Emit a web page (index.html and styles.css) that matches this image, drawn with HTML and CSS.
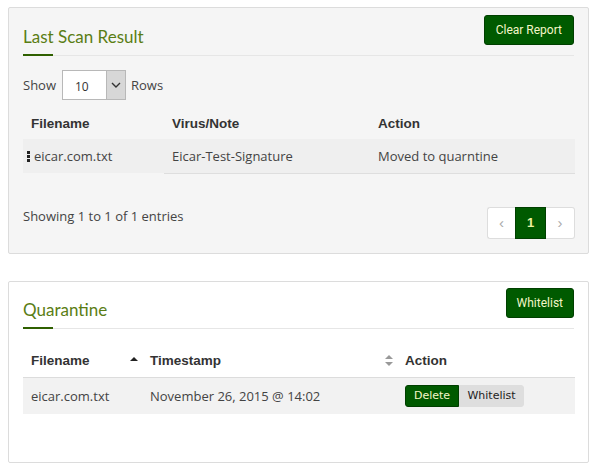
FILE: index.html
```html
<!DOCTYPE html>
<html>
<head>
<meta charset="utf-8">
<link rel="stylesheet" href="styles.css">
</head>
<body>
<section class="panel panel-grey">
  <div class="panel-head">
    <div class="title-wrap">
      <h2 class="title">Last Scan Result</h2>
      <div class="title-bar"></div>
    </div>
    <button class="btn-green btn-lg">Clear Report</button>
  </div>
  <div class="show-row">
    <span>Show</span>
    <div class="select">
      <span class="select-val">10</span>
      <span class="select-arrow">
        <svg width="10" height="6" viewBox="0 0 10 6"><path d="M1 1 L5 5 L9 1" fill="none" stroke="#333" stroke-width="1.4"/></svg>
      </span>
    </div>
    <span>Rows</span>
  </div>
  <table class="tbl tbl-scan">
    <thead>
      <tr><th class="c1">Filename</th><th class="c2">Virus/Note</th><th class="c3">Action</th></tr>
    </thead>
    <tbody>
      <tr>
        <td class="c1 first"><span class="dots"><i></i><i></i><i></i></span><span>eicar.com.txt</span></td>
        <td class="c2 bordered">Eicar-Test-Signature</td>
        <td class="c3 bordered">Moved to quarntine</td>
      </tr>
    </tbody>
  </table>
  <div class="foot-row">
    <span class="info">Showing 1 to 1 of 1 entries</span>
    <div class="pager">
      <span class="pg pg-prev">&lsaquo;</span>
      <span class="pg pg-active">1</span>
      <span class="pg pg-next">&rsaquo;</span>
    </div>
  </div>
</section>

<section class="panel panel-white">
  <div class="panel-head">
    <div class="title-wrap">
      <h2 class="title">Quarantine</h2>
      <div class="title-bar"></div>
    </div>
    <button class="btn-green btn-lg btn-wl">Whitelist</button>
  </div>
  <table class="tbl tbl-q">
    <thead>
      <tr>
        <th class="q1"><span>Filename</span><svg class="sort" width="8" height="6" viewBox="0 0 8 6"><path d="M0 5 L4 1 L8 5 Z" fill="#222"/></svg></th>
        <th class="q2"><span>Timestamp</span><svg class="sort" width="8" height="11" viewBox="0 0 8 11"><path d="M0 4 L4 0 L8 4 Z M0 7 L4 11 L8 7 Z" fill="#999"/></svg></th>
        <th class="q3">Action</th>
      </tr>
    </thead>
    <tbody>
      <tr>
        <td>eicar.com.txt</td>
        <td>November 26, 2015 @ 14:02</td>
        <td><span class="grp"><button class="btn-green btn-sm">Delete</button><button class="btn-grey btn-sm">Whitelist</button></span></td>
      </tr>
    </tbody>
  </table>
</section>
</body>
</html>
```

FILE: styles.css
```css
* { box-sizing: border-box; }
body {
  margin: 0;
  padding: 7px 11px 0 8px;
  font-family: "Open Sans", Lato, sans-serif;
  font-size: 13px;
  color: #444;
  background: #fff;
}
.panel {
  width: 581px;
  border: 1px solid #dcdcdc;
  border-radius: 2px;
  padding: 0 14px;
}
.panel-grey { background: #f5f5f5; padding-bottom: 14px; }
.panel-white { background: #fff; margin-top: 27px; padding-bottom: 48px; }

.panel-head {
  display: flex;
  justify-content: space-between;
  align-items: flex-start;
  border-bottom: 1px solid #e6e6e6;
  padding-top: 7px;
}
.panel-white .panel-head { padding-top: 6px; }
.title-wrap { padding-top: 11px; }
.title {
  margin: 0;
  font-family: Lato, sans-serif;
  font-weight: 400;
  font-size: 17px;
  line-height: 22px;
  color: #5a7d14;
}
.title-bar {
  width: 30px;
  height: 2px;
  background: #2f6000;
  margin-top: 6px;
  margin-bottom: -1px;
}
.btn-green, .btn-grey {
  font-family: Roboto, "Liberation Sans", sans-serif;
  cursor: pointer;
}
.btn-green {
  background: #005a00;
  border: 1px solid #003f00;
  color: #f4f6c8;
}
.btn-lg {
  height: 30px;
  padding: 0 11px;
  font-size: 12px;
  border-radius: 3px;
}
.btn-wl { padding: 0 10px; }

.show-row {
  display: flex;
  align-items: center;
  gap: 5px;
  margin-top: 14px;
  color: #444;
}
.select {
  display: flex;
  width: 64px;
  height: 30px;
  border: 1px solid #b8b8b8;
  background: #fff;
  margin-left: 1px;
}
.select-val {
  flex: 1;
  font-size: 12px;
  padding-left: 12px;
  padding-top: 7px;
  color: #333;
}
.select-arrow {
  width: 19px;
  background: #d7d7d7;
  border-left: 1px solid #b8b8b8;
  display: flex;
  align-items: center;
  justify-content: center;
}

.tbl {
  width: 552px;
  border-collapse: collapse;
  table-layout: fixed;
}
.tbl th {
  font-family: "Liberation Sans", Arial, sans-serif;
  font-weight: 700;
  font-size: 13.5px;
  color: #333;
  text-align: left;
  padding: 0 8px;
}
.tbl td { padding: 0 8px; color: #444; }

.tbl-scan { margin-top: 7px; }
.tbl-scan th { height: 32px; }
.tbl-scan td { height: 34px; background: #efefef; }
.tbl-scan .c1 { width: 141px; }
.tbl-scan .c2 { width: 206px; }
.tbl-scan td.first { padding-left: 4px; }
.tbl-scan td.bordered { border-bottom: 1px solid #dedede; }
.dots {
  display: inline-flex;
  flex-direction: column;
  gap: 1px;
  margin-right: 4px;
  vertical-align: middle;
  position: relative;
  top: -1px;
}
.dots i {
  display: block;
  width: 3px;
  height: 3px;
  background: #222;
}

.foot-row {
  display: flex;
  justify-content: space-between;
  align-items: flex-start;
  margin-top: 33px;
}
.info { color: #444; }
.pager {
  display: flex;
  height: 32px;
  margin-right: -1px;
}
.pg {
  display: flex;
  align-items: center;
  justify-content: center;
  background: #fff;
  border: 1px solid #ddd;
  color: #aaa;
  font-size: 15px;
  font-family: "Liberation Sans", sans-serif;
}
.pg-prev { width: 28px; border-radius: 3px 0 0 3px; border-right: 0; }
.pg-next { width: 29px; border-radius: 0 3px 3px 0; border-left: 0; }
.pg-active {
  width: 31px;
  background: #005a00;
  border-color: #003f00;
  color: #eef2a0;
  font-size: 13px;
  font-weight: 700;
}

.tbl-q { margin-top: 14px; }
.tbl-q th {
  height: 35px;
  border-bottom: 1px solid #dcdcdc;
  padding-top: 1px;
}
.tbl-q th span { display: inline-block; }
.tbl-q .q1 { width: 119px; }
.tbl-q .q2 { width: 255px; }
.tbl-q th .sort { float: right; margin-top: 3px; margin-right: -4px; }
.tbl-q th.q2 .sort { margin-top: 2px; }
.tbl-q td { height: 36px; background: #f2f2f2; }
.grp { display: inline-flex; }
.btn-sm {
  height: 22px;
  font-family: Tahoma, "DejaVu Sans", "Liberation Sans", sans-serif;
  font-size: 11px;
  padding: 0;
}
.btn-green.btn-sm { width: 54px; border-radius: 3px 0 0 3px; }
.btn-grey {
  width: 65px;
  background: #dedede;
  border: 1px solid #dedede;
  color: #222;
  border-radius: 0 3px 3px 0;
}
```
